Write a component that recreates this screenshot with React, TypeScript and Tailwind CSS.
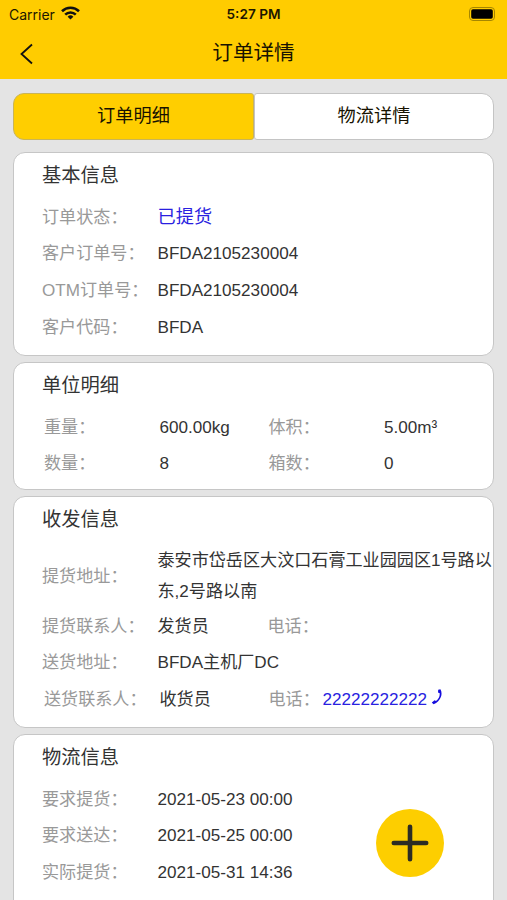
import * as React from "react";

export default function App() {
  return (
    <div className="h-[900px] w-[507px] overflow-hidden bg-[#e4e4e4] font-['Liberation_Sans','Noto_Sans_CJK_SC',sans-serif] text-[17.1px] text-[#333]">
      <header className="h-[79px] bg-[#fc0]">
        <StatusBar />
        <div className="grid h-[51px] grid-cols-[100px_1fr_100px] items-center text-black">
          <svg className="ml-[20px]" width="14" height="22" viewBox="0 0 14 22" fill="none" stroke="#111" strokeWidth="1.8">
            <path d="M12 1.5 1.5 11 12 20.5" />
          </svg>
          <h1 className="text-center text-[20.6px] leading-none text-[#171200]">订单详情</h1>
        </div>
      </header>

      <div className="mx-[13px] mt-[14px] flex h-[47px] text-[18.2px] text-[#171200]">
        <button className="w-[241px] rounded-l-[11px] rounded-r-[3px] border border-[#c9b458] bg-[#ffce00]">订单明细</button>
        <button className="w-[240px] rounded-l-[3px] rounded-r-[12px] border border-[#c4c4c4] bg-white">物流详情</button>
      </div>

      <main className="mx-[13px] mt-[12px] flex flex-col gap-[6px]">
        <Card title="基本信息" className="h-[204px]">
          <Row label="订单状态">
            <span className="text-[18.2px] text-[#2a1fe0]">已提货</span>
          </Row>
          <Row label="客户订单号">BFDA2105230004</Row>
          <Row label="OTM订单号">BFDA2105230004</Row>
          <Row label="客户代码">BFDA</Row>
        </Card>

        <Card title="单位明细" className="h-[128px]">
          <div className="grid grid-cols-2 pl-[2px]">
            <Row label="重量">600.00kg</Row>
            <Row label="体积">5.00m³</Row>
            <Row label="数量">8</Row>
            <Row label="箱数">0</Row>
          </div>
        </Card>

        <Card title="收发信息" className="h-[232px]">
          <div className="flex h-[65px] items-center pt-[2px]">
            <Label>提货地址</Label>
            <p className="whitespace-nowrap leading-[30.5px]">
              泰安市岱岳区大汶口石膏工业园园区1号路以
              <br />
              东,2号路以南
            </p>
          </div>
          <Row label="提货联系人">
            <span className="w-[110px]">发货员</span>
            <span className="text-[#999]">电话：</span>
          </Row>
          <Row label="送货地址">BFDA主机厂DC</Row>
          <div className="pl-[2px]">
            <Row label="送货联系人">
              <span className="w-[109px]">收货员</span>
              <span className="w-[54px] text-[#999]">电话：</span>
              <span className="text-[#2a1fe0]">22222222222</span>
              <PhoneIcon />
            </Row>
          </div>
        </Card>

        <Card title="物流信息" className="h-[204px]">
          <Row label="要求提货">2021-05-23 00:00</Row>
          <Row label="要求送达">2021-05-25 00:00</Row>
          <Row label="实际提货">2021-05-31 14:36</Row>
        </Card>
      </main>

      <button className="fixed top-[809px] left-[376px] flex h-[68px] w-[68px] items-center justify-center rounded-full bg-[#fdce00]">
        <svg width="38" height="38" viewBox="0 0 38 38" stroke="#2c2c24" strokeWidth="4.6" strokeLinecap="round">
          <path d="M19 2.8v32.4M2.8 19h32.4" />
        </svg>
      </button>
    </div>
  );
}

function StatusBar() {
  return (
    <div className="grid h-[28px] grid-cols-3 items-center px-[9px] font-[Inter] text-[13.6px] text-[#1c1600]">
      <div className="flex items-center gap-[6px]">
        <span className="text-[14px]">Carrier</span>
        <svg className="-mt-[2px]" width="19" height="14" viewBox="0 0 19 14" fill="none" stroke="#111" strokeWidth="2.6">
          <path d="M1 5.2a12.2 12.2 0 0 1 17 0" />
          <path d="M4.2 8.6a7.6 7.6 0 0 1 10.6 0" />
          <path d="M9.5 13.6 6.6 10.7a4.2 4.2 0 0 1 5.8 0z" fill="#111" stroke="none" />
        </svg>
      </div>
      <span className="text-center font-semibold">5:27 PM</span>
      <svg className="ml-auto" width="29" height="14" viewBox="0 0 29 14">
        <rect x=".5" y=".5" width="25" height="13" rx="3.5" fill="none" stroke="#a68600" />
        <rect x="2.2" y="2.2" width="21.6" height="9.6" rx="1.8" fill="#000" />
        <path d="M27 4.8c1.8.7 1.8 3.700 4.400z" fill="#a68600" />
      </svg>
    </div>
  );
}

function Card({ title, className, children }: { title: string; className: string; children: React.ReactNode }) {
  return (
    <section className={`shrink-0 rounded-[12px] border border-[#c6c6c6] bg-white pl-[28px] ${className}`}>
      <h2 className="flex h-[46px] items-center text-[19.3px]">{title}</h2>
      {children}
    </section>
  );
}

function Label({ children }: { children: React.ReactNode }) {
  return <span className="w-[115.5px] shrink-0 whitespace-nowrap text-[#999]">{children}：</span>;
}

function Row({ label, children }: { label: string; children: React.ReactNode }) {
  return (
    <div className="flex h-[36.7px] items-center whitespace-nowrap">
      <Label>{label}</Label>
      {children}
    </div>
  );
}

function PhoneIcon() {
  return (
    <svg className="-mt-[5px] ml-[4px]" width="12" height="16" viewBox="0 0 12 16" fill="#160ddd">
      <path d="M7.200.8 9.400.3C12.500 5.500 9 12.800 2.500 15.300L.8 13.500 3.600 11.300 5 12C7.800 9.900 8.900 7.300 8.700 4.300L7 3.600z" />
    </svg>
  );
}
